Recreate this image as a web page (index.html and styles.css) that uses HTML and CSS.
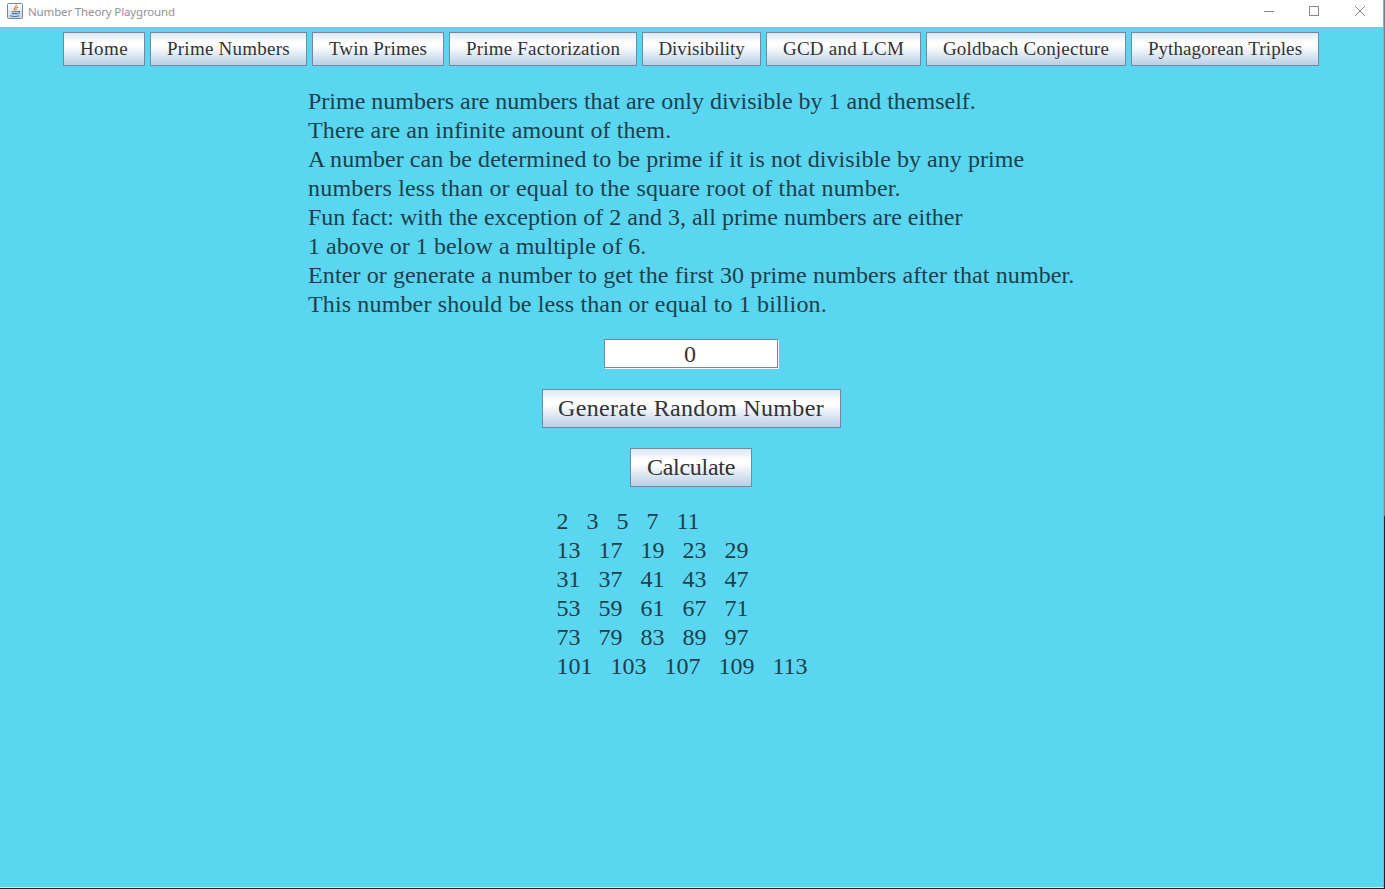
FILE: index.html
```html
<!DOCTYPE html>
<html lang="en">
<head>
<meta charset="utf-8">
<title>Number Theory Playground</title>
<link rel="stylesheet" href="styles.css">
</head>
<body>
<div class="desktop">
<div class="window">
<header class="titlebar">
<svg class="app-icon" viewBox="0 0 16 16"><defs><linearGradient id="tile" x2="0" y2="1"><stop stop-color="#fff"/><stop offset="1" stop-color="#c9d6e3"/></linearGradient></defs><rect x=".5" y=".5" width="15" height="15" rx="1" fill="url(#tile)" stroke="#6d87a3"/><g fill="none" stroke-linecap="round"><path d="M9.200 2C10 4 6 4.500 7.300 7.200M10.800 4.200C8.500 5 8.500 5.500 9 7" stroke="#e4792c" stroke-width="1.200"/><path d="M4.800 8.800h5.700M5.300 10.600h4.600M3.500 12.800c2 1 6.500 1 8.500 0M11 8.500c2.500-.5 2 1.800 0 2.300" stroke="#48759f" stroke-width="1.100"/></g></svg>
<h1 class="title">Number Theory Playground</h1>
<svg class="controls" viewBox="0 0 103 12" fill="none" stroke="#858585"><path d="M1 6.500h10M46.500 1.500h9v9h-9zM92 1l10 10M102 1L92 11"/></svg>
</header>
<nav class="tabs">
<button class="btn home">Home</button>
<button class="btn primes">Prime Numbers</button>
<button class="btn twins">Twin Primes</button>
<button class="btn factors">Prime Factorization</button>
<button class="btn divisibility">Divisibility</button>
<button class="btn gcd">GCD and LCM</button>
<button class="btn goldbach">Goldbach Conjecture</button>
<button class="btn triples">Pythagorean Triples</button>
</nav>
<main class="content">
<div class="intro">
<p class="fit-a">Prime numbers are numbers that are only divisible by 1 and themself.</p>
<p class="fit-c">There are an infinite amount of them.</p>
<p class="fit-b">A number can be determined to be prime if it is not divisible by any prime</p>
<p class="fit-e">numbers less than or equal to the square root of that number.</p>
<p class="fit-a">Fun fact: with the exception of 2 and 3, all prime numbers are either</p>
<p class="fit-b">1 above or 1 below a multiple of 6.</p>
<p class="fit-c">Enter or generate a number to get the first 30 prime numbers after that number.</p>
<p class="fit-d">This number should be less than or equal to 1 billion.</p>
</div>
<input class="field" type="text" value="0" aria-label="Number">
<button class="btn generate">Generate Random Number</button>
<button class="btn calculate">Calculate</button>
<div class="results">
<p>2   3   5   7   11   </p>
<p>13   17   19   23   29   </p>
<p>31   37   41   43   47   </p>
<p>53   59   61   67   71   </p>
<p>73   79   83   89   97   </p>
<p>101   103   107   109   113   </p>
</div>
</main>
</div>
</div>
</body>
</html>
```
FILE: styles.css
```css
* { box-sizing: border-box; }
body { margin: 0; }
p { margin: 0; }

.desktop {
  height: 889px;
  padding: 0 1px 1px 0;
  background: linear-gradient(#6d8291 0, #7b8590 515px, #0d2b38 517px, #0d2b38 100%);
}
.window {
  height: 888px;
  background: #5ad6f0;
  border-right: 1px solid #6fb9cc;
  border-bottom: 1px solid #e9f8fb;
  font: 24px/29px "Liberation Serif", serif;
  color: #1d3f4c;
}

.titlebar {
  display: flex;
  height: 27px;
  padding: 3px 17px 0 7px;
  background: #fff;
}
.app-icon { width: 16px; height: 16px; }
.title {
  flex: 1;
  margin: 0 0 0 5px;
  font: 11.5px/18px "Noto Sans", sans-serif;
  letter-spacing: -0.15px;
  color: #929292;
}
.controls { width: 103px; height: 12px; margin-top: 2px; }

.tabs { display: flex; gap: 5px; padding: 5px 0 0 63px; }
.btn {
  flex: none;
  height: 34px;
  padding: 0;
  border: 1px solid #7289a0;
  border-radius: 0;
  background: linear-gradient(#dde8f3 0, #fff 30%, #fff 40%, #b8cfe5 100%);
  font: 19px/30px "Liberation Serif", serif;
  color: #333;
  white-space: nowrap;
}
.home { width: 82px; letter-spacing: 0.4px; }
.primes { width: 157px; letter-spacing: 0.25px; }
.twins { width: 132px; letter-spacing: 0.17px; }
.factors { width: 188px; letter-spacing: 0.2px; }
.divisibility { width: 119px; letter-spacing: -0.03px; }
.gcd { width: 155px; letter-spacing: 0.27px; }
.goldbach { width: 200px; letter-spacing: 0.22px; }
.triples { width: 188px; letter-spacing: 0.09px; }

.content {
  display: flex;
  flex-direction: column;
  align-items: center;
  padding: 21px 1px 0 0;
}
.intro { width: 766px; white-space: nowrap; }
.fit-b { letter-spacing: 0.05px; }
.fit-c { letter-spacing: 0.11px; }
.fit-d { letter-spacing: 0.14px; }
.fit-e { letter-spacing: 0.19px; }

.field {
  width: 174px;
  height: 29px;
  margin-top: 20px;
  padding: 1px 2px 0 0;
  border: 1px solid #7289a0;
  box-shadow: 1px 1px 0 #eefafd;
  background: #fff;
  font: 24px/26px "Liberation Serif", serif;
  color: #333;
  text-align: center;
}
.generate, .calculate { height: 39px; font-size: 24px; line-height: 35px; padding-bottom: 1px; }
.generate { width: 299px; margin-top: 21px; letter-spacing: 0.34px; }
.calculate { width: 122px; margin-top: 20px; letter-spacing: -0.28px; }

.results { margin-top: 20px; }
.results p { white-space: pre; }
```
